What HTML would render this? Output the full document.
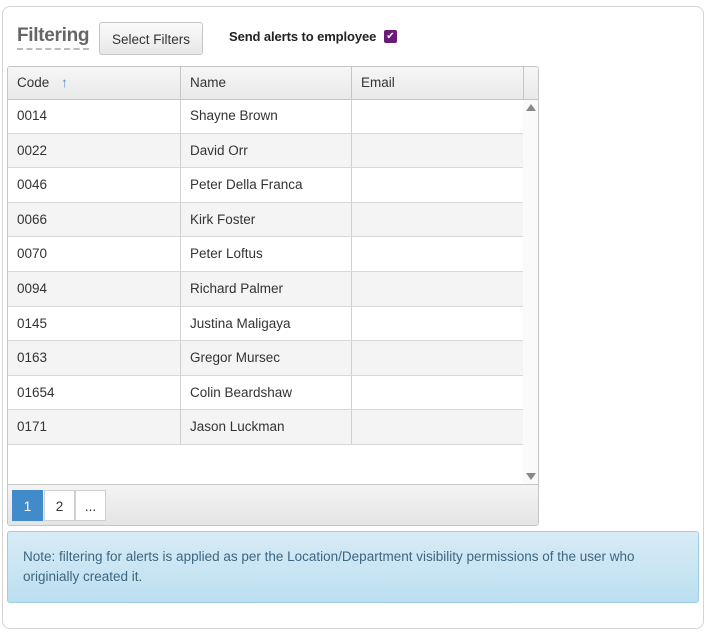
<!DOCTYPE html>
<html><head><style>
body{margin:0;width:707px;height:632px;background:#fff;font-family:"Liberation Sans",sans-serif;color:#333;position:relative;overflow:hidden}
.card{position:absolute;left:2px;top:6px;width:700px;height:621px;border:1px solid #d4d4d4;border-radius:8px}
.title{position:absolute;left:17px;top:25px;font-size:19px;font-weight:bold;color:#666;border-bottom:2px dashed #bbb;line-height:22px;padding-bottom:1px;letter-spacing:-0.3px}
.btn{position:absolute;left:99px;top:22px;width:104px;height:33px;border:1px solid #c5c5c5;border-radius:3px;background:linear-gradient(#fafafa,#e8e8e8);font-size:13.5px;line-height:33px;text-align:center;box-sizing:border-box;color:#333}
.send{position:absolute;left:229px;top:29px;font-size:13px;font-weight:bold;color:#222;letter-spacing:-0.1px}
.cb{position:absolute;left:384px;top:30px;width:13px;height:13px;background:#6a1b7a;border-radius:2px;color:#fff;font-size:10px;line-height:13px;text-align:center}
.grid{position:absolute;left:7px;top:66px;width:530px;height:458px;border:1px solid #c5c5c5;border-radius:3px;overflow:hidden}
.hdr{position:absolute;left:0;top:0;width:530px;height:32px;background:linear-gradient(#f6f6f6,#e9e9e9);border-bottom:1px solid #c5c5c5}
.hdr div{position:absolute;top:0;height:32px;line-height:32px;font-size:13.5px;padding-left:9px;box-sizing:border-box;border-right:1px solid #c5c5c5}
.row{position:absolute;left:0;width:515px;height:34.6px;border-bottom:1px solid #d8d8d8;box-sizing:border-box;font-size:13.5px}
.row.alt{background:#f4f4f4}
.row div{position:absolute;top:0;height:100%;line-height:33px;padding-left:9px;box-sizing:border-box;border-right:1px solid #d0d0d0}
.sb{position:absolute;left:515px;top:33px;width:15px;height:384px;background:#fafafa}
.pager{position:absolute;left:0;top:417px;width:530px;height:41px;border-top:1px solid #c5c5c5;background:linear-gradient(#f4f4f4,#e4e4e4)}
.pg{position:absolute;top:5px;width:31px;height:31px;border:1px solid #d0d0d0;background:#fff;text-align:center;line-height:31px;font-size:13.5px;box-sizing:border-box}
.note{position:absolute;left:7px;top:531px;width:692px;height:72px;border:1px solid #9fcde6;border-radius:3px;background:linear-gradient(#d8ebf6,#bcdff0);box-sizing:border-box;padding:15px 15px;font-size:13.5px;line-height:20px;color:#3d6680}
</style></head><body>
<div class="card"></div>
<div class="title">Filtering</div>
<div class="btn">Select Filters</div>
<div class="send">Send alerts to employee</div>
<div class="cb">✔</div>
<div class="grid">
<div class="hdr">
<div style="left:0;width:173px">Code <span style="color:#5b8fc7;margin-left:8px">↑</span></div>
<div style="left:173px;width:171px">Name</div>
<div style="left:344px;width:172px">Email</div>
</div>
<div class="row" style="top:32px"><div style="left:0;width:173px">0014</div><div style="left:173px;width:171px">Shayne Brown</div></div>
<div class="row alt" style="top:66.6px"><div style="left:0;width:173px">0022</div><div style="left:173px;width:171px">David Orr</div></div>
<div class="row" style="top:101.2px"><div style="left:0;width:173px">0046</div><div style="left:173px;width:171px">Peter Della Franca</div></div>
<div class="row alt" style="top:135.8px"><div style="left:0;width:173px">0066</div><div style="left:173px;width:171px">Kirk Foster</div></div>
<div class="row" style="top:170.4px"><div style="left:0;width:173px">0070</div><div style="left:173px;width:171px">Peter Loftus</div></div>
<div class="row alt" style="top:205px"><div style="left:0;width:173px">0094</div><div style="left:173px;width:171px">Richard Palmer</div></div>
<div class="row" style="top:239.6px"><div style="left:0;width:173px">0145</div><div style="left:173px;width:171px">Justina Maligaya</div></div>
<div class="row alt" style="top:274.2px"><div style="left:0;width:173px">0163</div><div style="left:173px;width:171px">Gregor Mursec</div></div>
<div class="row" style="top:308.8px"><div style="left:0;width:173px">01654</div><div style="left:173px;width:171px">Colin Beardshaw</div></div>
<div class="row alt" style="top:343.4px"><div style="left:0;width:173px">0171</div><div style="left:173px;width:171px">Jason Luckman</div></div>
<div class="sb"><div style="position:absolute;left:3px;top:4px;width:0;height:0;border-left:5px solid transparent;border-right:5px solid transparent;border-bottom:7px solid #888"></div><div style="position:absolute;left:3px;top:373px;width:0;height:0;border-left:5px solid transparent;border-right:5px solid transparent;border-top:7px solid #888"></div></div>
<div class="pager">
<div class="pg" style="left:4px;background:#428bca;border-color:#428bca;color:#fff">1</div>
<div class="pg" style="left:36px">2</div>
<div class="pg" style="left:67px">...</div>
</div>
</div>
<div class="note">Note: filtering for alerts is applied as per the Location/Department visibility permissions of the user who originially created it.</div>
</body></html>
